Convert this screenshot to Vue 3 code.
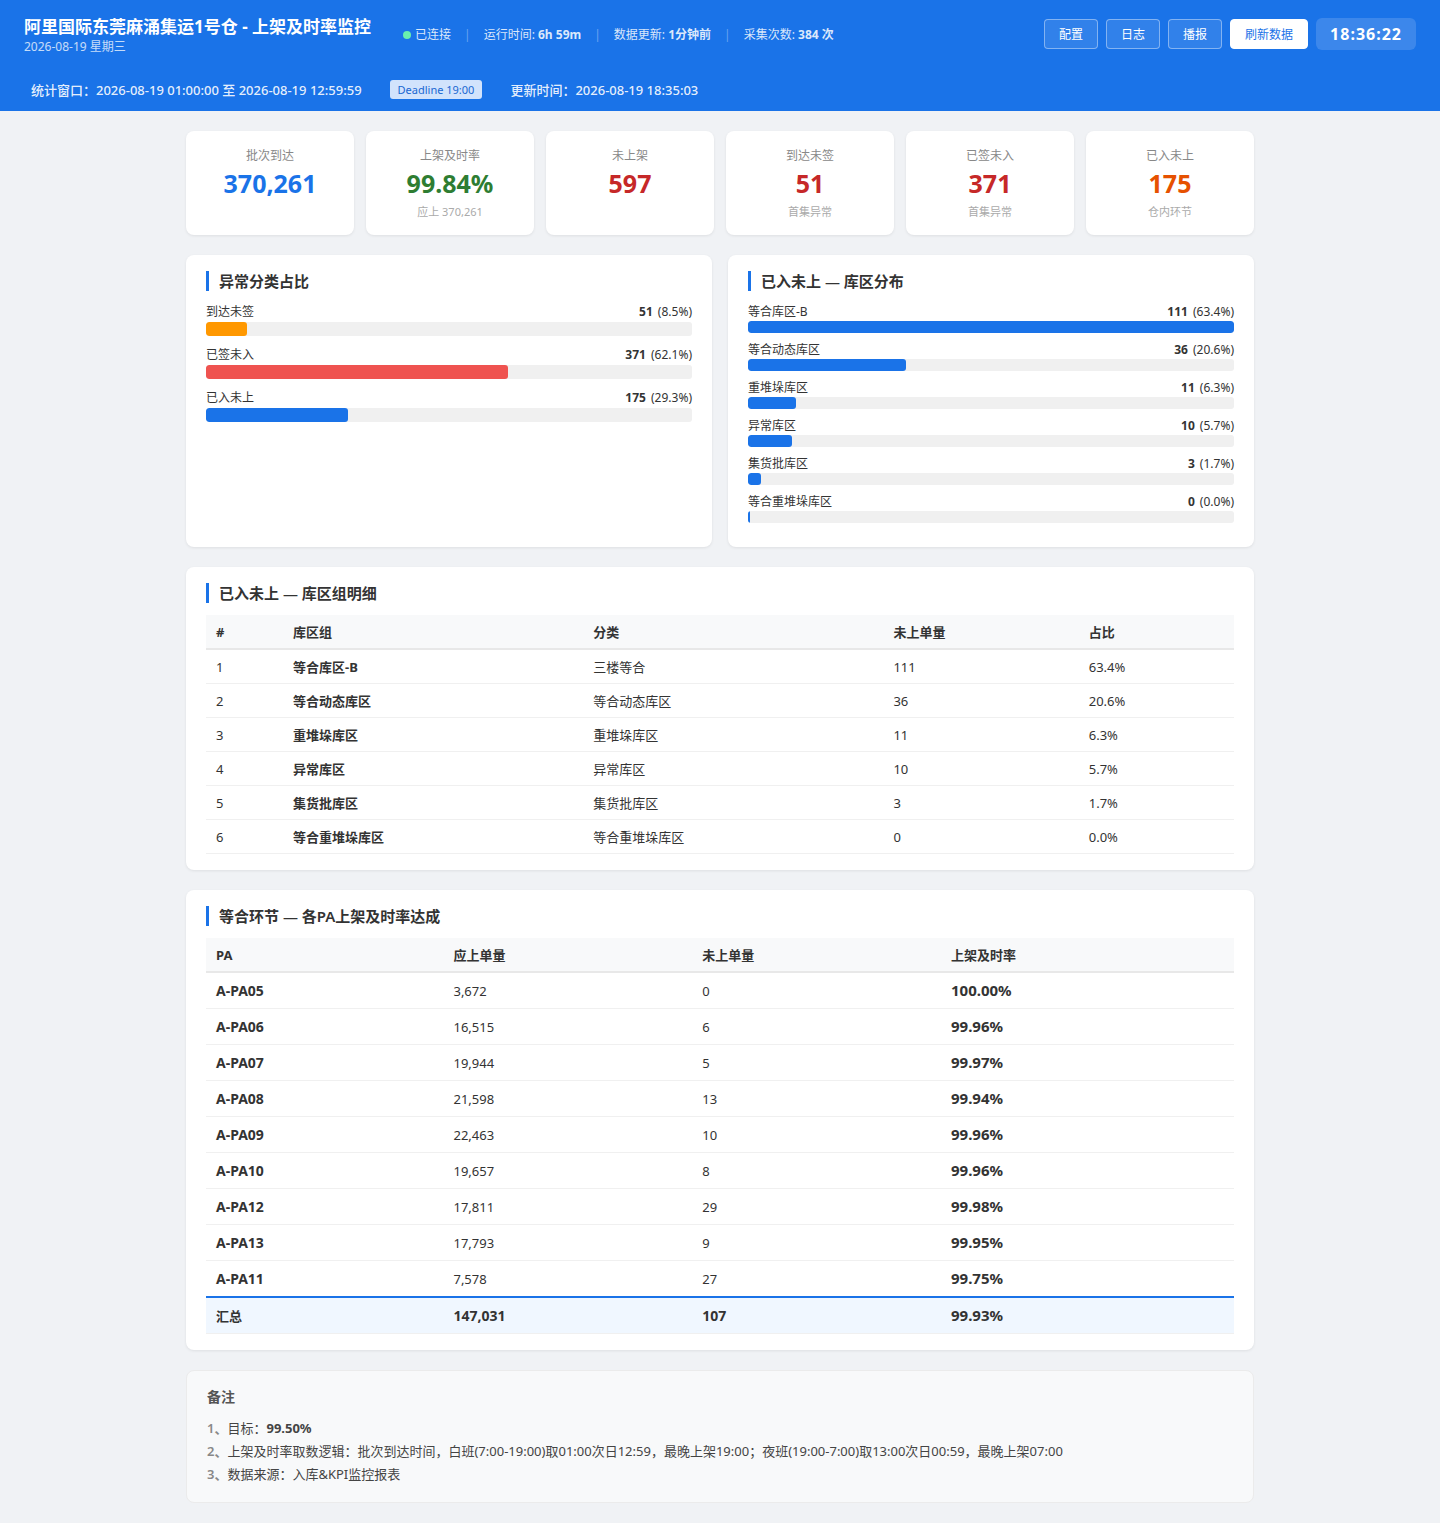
<script setup>
import { ref } from 'vue'

const clock = ref('18:36:22')

const stats = [
  { label: '批次到达', value: '370,261', sub: '', color: 'blue' },
  { label: '上架及时率', value: '99.84%', sub: '应上 370,261', color: 'green' },
  { label: '未上架', value: '597', sub: '', color: 'red' },
  { label: '到达未签', value: '51', sub: '首集异常', color: 'red' },
  { label: '已签未入', value: '371', sub: '首集异常', color: 'red' },
  { label: '已入未上', value: '175', sub: '仓内环节', color: 'orange' },
]

const categories = [
  { name: '到达未签', count: 51, pct: 8.5, color: 'amber' },
  { name: '已签未入', count: 371, pct: 62.1, color: 'coral' },
  { name: '已入未上', count: 175, pct: 29.3, color: 'blue' },
]

const areas = [
  { name: '等合库区-B', type: '三楼等合', count: 111, pct: 63.4 },
  { name: '等合动态库区', type: '等合动态库区', count: 36, pct: 20.6 },
  { name: '重堆垛库区', type: '重堆垛库区', count: 11, pct: 6.3 },
  { name: '异常库区', type: '异常库区', count: 10, pct: 5.7 },
  { name: '集货批库区', type: '集货批库区', count: 3, pct: 1.7 },
  { name: '等合重堆垛库区', type: '等合重堆垛库区', count: 0, pct: 0 },
]

const maxArea = Math.max(...areas.map((a) => a.count))

const paRows = [
  { pa: 'A-PA05', due: '3,672', missed: 0, rate: '100.00%' },
  { pa: 'A-PA06', due: '16,515', missed: 6, rate: '99.96%' },
  { pa: 'A-PA07', due: '19,944', missed: 5, rate: '99.97%' },
  { pa: 'A-PA08', due: '21,598', missed: 13, rate: '99.94%' },
  { pa: 'A-PA09', due: '22,463', missed: 10, rate: '99.96%' },
  { pa: 'A-PA10', due: '19,657', missed: 8, rate: '99.96%' },
  { pa: 'A-PA12', due: '17,811', missed: 29, rate: '99.98%' },
  { pa: 'A-PA13', due: '17,793', missed: 9, rate: '99.95%' },
  { pa: 'A-PA11', due: '7,578', missed: 27, rate: '99.75%' },
]
</script>

<template>
  <div class="page">
    <header class="header">
      <div class="header-top">
        <div class="title">
          <h1>阿里国际东莞麻涌集运1号仓 - 上架及时率监控</h1>
          <div class="date">2026-08-19 星期三</div>
        </div>
        <div class="status">
          <span class="conn"><i class="dot"></i>已连接</span>
          <span class="sep">|</span>
          <span>运行时间: <b>6h 59m</b></span>
          <span class="sep">|</span>
          <span>数据更新: <b>1分钟前</b></span>
          <span class="sep">|</span>
          <span>采集次数: <b>384 次</b></span>
        </div>
        <div class="actions">
          <button type="button" class="btn">配置</button>
          <button type="button" class="btn">日志</button>
          <button type="button" class="btn">播报</button>
          <button type="button" class="btn primary">刷新数据</button>
          <div class="clock">{{ clock }}</div>
        </div>
      </div>
      <div class="header-sub">
        <span class="range">统计窗口：2026-08-19 01:00:00 至 2026-08-19 12:59:59</span>
        <span class="deadline">Deadline 19:00</span>
        <span class="range">更新时间：2026-08-19 18:35:03</span>
      </div>
    </header>

    <main class="container">
      <div class="stats">
        <div v-for="s in stats" :key="s.label" class="stat">
          <div class="stat-label">{{ s.label }}</div>
          <div class="stat-value" :class="s.color">{{ s.value }}</div>
          <div class="stat-sub">{{ s.sub }}</div>
        </div>
      </div>

      <div class="charts">
        <section class="panel">
          <h2>异常分类占比</h2>
          <div v-for="c in categories" :key="c.name" class="bar-row large">
            <div class="bar-head">
              <span>{{ c.name }}</span>
              <span><b>{{ c.count }}</b> ({{ c.pct }}%)</span>
            </div>
            <div class="bar-track">
              <div class="bar-fill" :class="c.color" :style="{ width: c.pct + '%' }"></div>
            </div>
          </div>
        </section>

        <section class="panel">
          <h2>已入未上 — 库区分布</h2>
          <div v-for="a in areas" :key="a.name" class="bar-row">
            <div class="bar-head">
              <span>{{ a.name }}</span>
              <span><b>{{ a.count }}</b> ({{ a.pct.toFixed(1) }}%)</span>
            </div>
            <div class="bar-track">
              <div class="bar-fill" :style="{ width: (a.count / maxArea) * 100 + '%' }"></div>
            </div>
          </div>
        </section>
      </div>

      <section class="panel">
        <h2>已入未上 — 库区组明细</h2>
        <table class="area-table">
          <thead>
            <tr>
              <th>#</th>
              <th>库区组</th>
              <th>分类</th>
              <th>未上单量</th>
              <th>占比</th>
            </tr>
          </thead>
          <tbody>
            <tr v-for="(a, i) in areas" :key="a.name">
              <td>{{ i + 1 }}</td>
              <td><b>{{ a.name }}</b></td>
              <td>{{ a.type }}</td>
              <td>{{ a.count }}</td>
              <td>{{ a.pct.toFixed(1) }}%</td>
            </tr>
          </tbody>
        </table>
      </section>

      <section class="panel">
        <h2>等合环节 — 各PA上架及时率达成</h2>
        <table class="pa-table">
          <thead>
            <tr>
              <th>PA</th>
              <th>应上单量</th>
              <th>未上单量</th>
              <th>上架及时率</th>
            </tr>
          </thead>
          <tbody>
            <tr v-for="r in paRows" :key="r.pa">
              <td class="strong">{{ r.pa }}</td>
              <td>{{ r.due }}</td>
              <td>{{ r.missed }}</td>
              <td class="rate">{{ r.rate }}</td>
            </tr>
          </tbody>
          <tfoot>
            <tr>
              <td>汇总</td>
              <td class="strong">147,031</td>
              <td class="strong">107</td>
              <td class="rate">99.93%</td>
            </tr>
          </tfoot>
        </table>
      </section>

      <section class="notes">
        <h3>备注</h3>
        <div class="note"><span class="num">1、</span>目标：<b>99.50%</b></div>
        <div class="note"><span class="num">2、</span>上架及时率取数逻辑：批次到达时间，白班(7:00-19:00)取01:00次日12:59，最晚上架19:00；夜班(19:00-7:00)取13:00次日00:59，最晚上架07:00</div>
        <div class="note"><span class="num">3、</span>数据来源：入库&amp;KPI监控报表</div>
      </section>
    </main>
  </div>
</template>

<style>
body {
  margin: 0;
  background: #f0f2f5;
}
</style>

<style scoped>
.page {
  font-family: "Noto Sans", "Noto Sans CJK SC", sans-serif;
  font-size: 13px;
  color: #333;
}

.page * {
  box-sizing: border-box;
}

h1,
h2,
h3 {
  margin: 0;
}

.header {
  background: #1a73e8;
  color: #fff;
}

.header-top {
  display: flex;
  align-items: center;
  padding: 12px 24px;
}

.title {
  padding-top: 4px;
}

h1 {
  font-size: 17px;
  line-height: 22px;
  font-weight: 700;
}

.date {
  font-size: 12px;
  line-height: 18px;
  opacity: 0.75;
}

.status {
  display: flex;
  align-items: center;
  gap: 13px;
  margin-left: 32px;
  padding-top: 2px;
  font-size: 12px;
  line-height: 16px;
  color: rgba(255, 255, 255, 0.85);
}

.conn {
  display: flex;
  align-items: center;
  gap: 4px;
}

.dot {
  width: 8px;
  height: 8px;
  border-radius: 50%;
  background: #69f0ae;
}

.sep {
  opacity: 0.4;
}

.actions {
  display: flex;
  align-items: center;
  gap: 8px;
  margin-left: auto;
}

.btn {
  height: 30px;
  padding: 2px 14px 0;
  border: 1px solid rgba(255, 255, 255, 0.4);
  border-radius: 4px;
  background: rgba(255, 255, 255, 0.1);
  color: #fff;
  font-family: inherit;
  font-size: 12px;
  line-height: 16px;
  cursor: pointer;
}

.btn.primary {
  background: #fff;
  border-color: #fff;
  color: #1a73e8;
}

.clock {
  padding: 4px 14px;
  border-radius: 6px;
  background: rgba(255, 255, 255, 0.15);
  font-size: 16px;
  line-height: 24px;
  font-weight: 700;
  letter-spacing: 1px;
}

.header-sub {
  display: flex;
  align-items: center;
  gap: 28px;
  padding: 11px 31px;
  line-height: 19px;
  color: rgba(255, 255, 255, 0.9);
}

.range {
  padding-top: 2px;
  font-weight: 500;
}

.deadline {
  padding: 1px 8px;
  border-radius: 3px;
  background: #d2e3fc;
  color: #1967d2;
  font-size: 11px;
  line-height: 17px;
}

.container {
  max-width: 1100px;
  margin: 0 auto;
  padding: 20px 16px;
  box-sizing: border-box;
  display: flex;
  flex-direction: column;
  gap: 20px;
}

.stats {
  display: grid;
  grid-template-columns: repeat(6, 1fr);
  gap: 12px;
}

.stat,
.panel {
  background: #fff;
  border-radius: 8px;
  box-shadow: 0 1px 3px rgba(0, 0, 0, 0.08);
}

.stat {
  padding: 16px 16px 14px;
  text-align: center;
}

.stat-label {
  font-size: 12px;
  line-height: 18px;
  color: #888;
}

.stat-value {
  margin-bottom: 2px;
  font-size: 25px;
  line-height: 36px;
  font-weight: 700;
}

.stat-value.blue {
  color: #1a73e8;
}

.stat-value.green {
  color: #2e7d32;
}

.stat-value.red {
  color: #c62828;
}

.stat-value.orange {
  color: #e65100;
}

.stat-sub {
  min-height: 18px;
  font-size: 11px;
  line-height: 18px;
  color: #aaa;
}

.charts {
  display: grid;
  grid-template-columns: 1fr 1fr;
  gap: 16px;
}

.panel {
  padding: 16px 20px;
}

h2 {
  margin-bottom: 12px;
  padding-left: 10px;
  border-left: 3px solid #1a73e8;
  font-size: 15px;
  line-height: 20px;
  font-weight: 600;
}

.bar-row {
  margin-bottom: 8px;
}

.bar-head {
  display: flex;
  justify-content: space-between;
  font-size: 12px;
  line-height: 18px;
}

.bar-head b {
  margin-right: 2px;
}

.bar-track {
  height: 12px;
  border-radius: 3px;
  background: #f0f0f0;
  overflow: hidden;
}

.bar-fill {
  height: 100%;
  min-width: 2px;
  border-radius: 3px;
  background: #1a73e8;
}

.bar-row.large {
  margin-bottom: 10px;
}

.large .bar-head {
  margin-bottom: 1px;
}

.large .bar-track {
  height: 14px;
}

.bar-fill.amber {
  background: #ff9800;
}

.bar-fill.coral {
  background: #ef5350;
}

table {
  width: 100%;
  table-layout: fixed;
  border-collapse: separate;
  border-spacing: 0;
}

th,
td {
  padding: 0 10px;
  text-align: left;
  line-height: 18px;
}

th {
  height: 35px;
  background: #f8f9fa;
  border-bottom: 2px solid #e8e8e8;
  font-weight: 700;
}

td {
  height: 34px;
  border-bottom: 1px solid #f0f0f0;
}

.area-table th:nth-child(1) {
  width: 7.5%;
}

.area-table th:nth-child(2),
.area-table th:nth-child(3) {
  width: 29.2%;
}

.area-table th:nth-child(4) {
  width: 19%;
}

.pa-table td {
  height: 36px;
}

.pa-table th:nth-child(1) {
  width: 23.1%;
}

.pa-table th:nth-child(2),
.pa-table th:nth-child(3) {
  width: 24.2%;
}

.pa-table .strong {
  font-size: 14px;
  font-weight: 700;
}

.pa-table .rate {
  font-size: 15px;
  line-height: 20px;
  padding-bottom: 2px;
  font-weight: 700;
}

.pa-table tbody tr:last-child td {
  height: 35px;
  border-bottom: none;
}

.pa-table tfoot td {
  height: 38px;
  border-top: 2px solid #1a73e8;
  background: #f0f7ff;
  font-weight: 700;
}

.notes {
  padding: 16px 20px;
  border: 1px solid #ebebeb;
  border-radius: 8px;
  background: #f8f9fa;
}

h3 {
  margin-bottom: 10px;
  font-size: 14px;
  line-height: 20px;
  color: #555;
}

.note {
  line-height: 23px;
  color: #444;
}

.num {
  font-weight: 600;
  color: #888;
}
</style>
